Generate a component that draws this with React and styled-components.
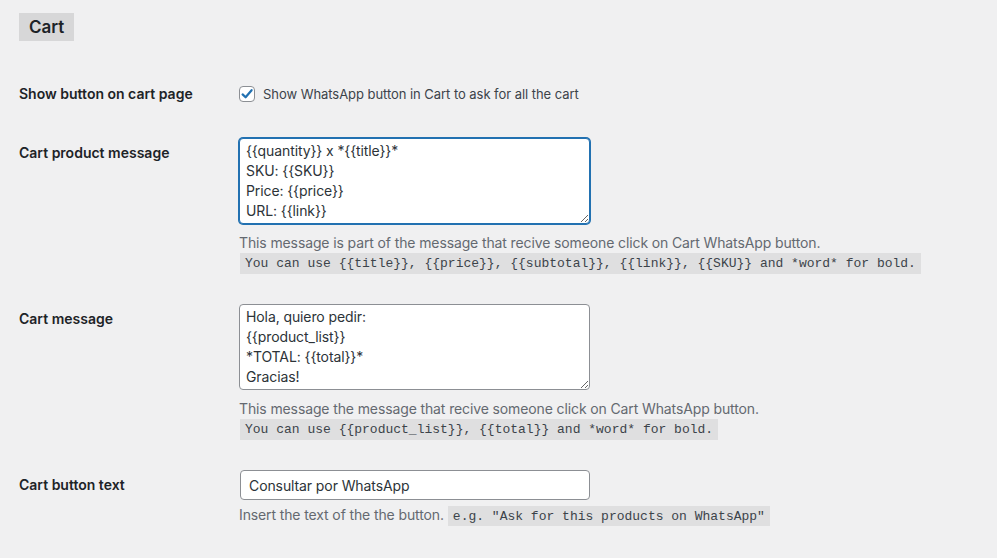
import React from "react";
import styled, { createGlobalStyle } from "styled-components";

const sans = `Inter, "Liberation Sans", Arial, sans-serif`;

const GlobalStyle = createGlobalStyle`
  html, body {
    margin: 0;
    padding: 0;
    background: #f0f0f1;
  }
  body {
    font-family: ${sans};
    font-size: 14px;
    color: #3c434a;
  }
`;

const Page = styled.div`
  padding: 13px 19px 30px;
  min-height: 558px;
  box-sizing: border-box;
`;

const SectionTitle = styled.h2`
  display: inline-block;
  margin: 0;
  padding: 3px 10px;
  background: #d7d7d8;
  color: #1d2327;
  font-size: 17px;
  line-height: 22px;
  font-weight: 600;
`;

const Form = styled.div`
  display: grid;
  grid-template-columns: 220px 1fr;
  row-gap: 30px;
  margin-top: 43px;
`;

const Label = styled.div`
  color: #1d2327;
  font-weight: 600;
  font-size: 14px;
  line-height: 20px;
  padding-top: ${({ $offset }) => $offset || 0}px;
  padding-bottom: ${({ $extra }) => $extra || 0}px;
`;

const Field = styled.div`
  display: flex;
  flex-direction: column;
  align-items: flex-start;
  padding-bottom: ${({ $extra }) => $extra || 0}px;
`;

const CheckLine = styled.label`
  display: flex;
  align-items: center;
  gap: 8px;
  height: 20px;
  font-size: 13px;
  letter-spacing: -0.05px;
  color: #3c434a;
`;

const CheckBox = styled.span`
  width: 16px;
  height: 16px;
  box-sizing: border-box;
  border: 1px solid #8c8f94;
  border-radius: 4px;
  background: #fff;
  display: flex;
  align-items: center;
  justify-content: center;
`;

const TextArea = styled.textarea`
  width: 351px;
  height: 86px;
  box-sizing: border-box;
  margin: 0;
  padding: 2px 6px;
  border: 1px solid ${({ $focused }) => ($focused ? "#2271b1" : "#8c8f94")};
  box-shadow: ${({ $focused }) => ($focused ? "0 0 0 1px #2271b1" : "none")};
  border-radius: 4px;
  background: #fff;
  color: #2c3338;
  font-family: ${sans};
  font-size: 14px;
  line-height: 20px;
  letter-spacing: -0.1px;
  outline: none;
  resize: vertical;
  overflow: hidden;
`;

const TextInput = styled.input`
  width: 350px;
  height: 30px;
  box-sizing: border-box;
  margin: 0 0 0 1px;
  padding: 0 8px;
  border: 1px solid #8c8f94;
  border-radius: 4px;
  background: #fff;
  color: #2c3338;
  font-family: ${sans};
  font-size: 14px;
  letter-spacing: -0.1px;
  outline: none;
`;

const Description = styled.p`
  margin: ${({ $gap }) => $gap || 9}px 0 0;
  color: #646970;
  font-size: 14px;
  line-height: 20px;
  letter-spacing: -0.12px;
`;

const Code = styled.code`
  display: ${({ $block }) => ($block ? "inline-block" : "inline")};
  margin-left: ${({ $block }) => ($block ? 1 : 4)}px;
  padding: 3px 5px 2px;
  background: rgba(0, 0, 0, 0.07);
  color: #3c434a;
  font-family: "Liberation Mono", "Courier New", monospace;
  font-size: 13px;
  line-height: 16px;
  letter-spacing: 0;
`;

const CheckMark = () => (
  <svg width="14" height="14" viewBox="0 0 14 14">
    <path
      d="M2.6 7.4 L5.6 10.3 L11.6 3.2"
      fill="none"
      stroke="#2271b1"
      strokeWidth="2.2"
      strokeLinecap="round"
      strokeLinejoin="round"
    />
  </svg>
);

const productMessage = "{{quantity}} x *{{title}}*\nSKU: {{SKU}}\nPrice: {{price}}\nURL: {{link}}";
const cartMessage = "Hola, quiero pedir:\n{{product_list}}\n*TOTAL: {{total}}*\nGracias!";

export default function App() {
  return (
    <Page>
      <GlobalStyle />
      <SectionTitle>Cart</SectionTitle>
      <Form>
        <Label $extra={4}>Show button on cart page</Label>
        <Field $extra={4}>
          <CheckLine>
            <CheckBox>
              <CheckMark />
            </CheckBox>
            Show WhatsApp button in Cart to ask for all the cart
          </CheckLine>
        </Field>

        <Label $offset={5}>Cart product message</Label>
        <Field>
          <TextArea $focused defaultValue={productMessage} spellCheck={false} />
          <Description>
            This message is part of the message that recive someone click on Cart WhatsApp button.
          </Description>
          <Code $block>
            You can use {"{{title}}, {{price}}, {{subtotal}}, {{link}}, {{SKU}}"} and *word* for bold.
          </Code>
        </Field>

        <Label $offset={5}>Cart message</Label>
        <Field>
          <TextArea defaultValue={cartMessage} spellCheck={false} />
          <Description>This message the message that recive someone click on Cart WhatsApp button.</Description>
          <Code $block>You can use {"{{product_list}}, {{total}}"} and *word* for bold.</Code>
        </Field>

        <Label $offset={5}>Cart button text</Label>
        <Field>
          <TextInput defaultValue="Consultar por WhatsApp" />
          <Description $gap={5}>
            Insert the text of the the button.
            <Code>e.g. "Ask for this products on WhatsApp"</Code>
          </Description>
        </Field>
      </Form>
    </Page>
  );
}
